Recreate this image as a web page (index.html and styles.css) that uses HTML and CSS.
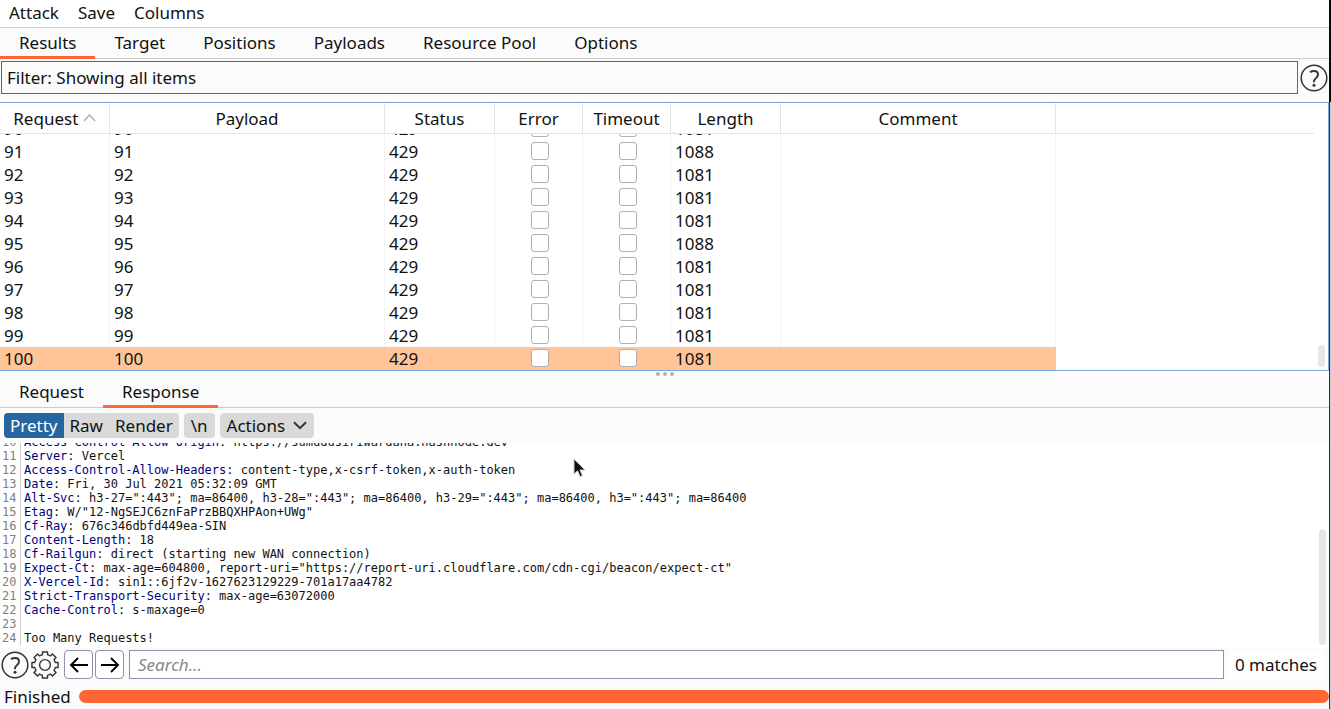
FILE: index.html
```html
<!DOCTYPE html>
<html lang="en">
<head>
  <meta charset="UTF-8">
  <meta name="viewport" content="width=device-width, initial-scale=1.0">
  <title>Intruder attack</title>
  <link rel="stylesheet" href="styles.css">
</head>
<body>
  <div class="app">
    <nav class="menu">
      <button>Attack</button>
      <button>Save</button>
      <button>Columns</button>
    </nav>

    <nav class="tabs">
      <button class="active">Results</button>
      <button>Target</button>
      <button>Positions</button>
      <button>Payloads</button>
      <button>Resource Pool</button>
      <button>Options</button>
    </nav>

    <div class="filter-row">
      <button class="filter">Filter: Showing all items</button>
      <button class="icon-btn" aria-label="Filter help">
        <svg width="28" height="28" viewBox="0 0 28 28" fill="none" stroke="#333" stroke-width="1.5">
          <circle cx="14" cy="14" r="12.8"/>
          <path d="M10 8.2c1.2-.8 2.5-1.2 3.9-1.2 2.6 0 4.1 1.3 4.1 3.4 0 3.6-4 3.9-4 7.2v.6" stroke-width="1.9"/>
          <circle cx="14" cy="21.2" r="1.5" fill="#333" stroke="none"/>
        </svg>
      </button>
    </div>

    <div class="results">
      <div class="results-scroll" id="resultsScroll">
        <table>
          <colgroup>
            <col class="w-mid"><col class="w-wide"><col class="w-mid"><col class="w-small">
            <col class="w-small"><col class="w-mid"><col class="w-wide"><col>
          </colgroup>
          <thead>
            <tr>
              <th>Request <svg width="13" height="8" viewBox="0 0 13 8" fill="none" stroke="#aaa" stroke-width="1.2"><path d="M1 7l5.5-6L12 7"/></svg></th>
              <th>Payload</th>
              <th>Status</th>
              <th>Error</th>
              <th>Timeout</th>
              <th>Length</th>
              <th>Comment</th>
              <th class="rest"></th>
            </tr>
          </thead>
          <tbody id="rows"></tbody>
        </table>
      </div>
      <div class="thumb thumb-results"></div>
    </div>

    <div class="splitter"><i></i><i></i><i></i></div>

    <nav class="tabs">
      <button>Request</button>
      <button class="active">Response</button>
    </nav>

    <div class="view-bar">
      <div class="group">
        <button class="on">Pretty</button>
        <button>Raw</button>
        <button>Render</button>
      </div>
      <button class="newline">\n</button>
      <button class="actions">Actions
        <svg width="14" height="9" viewBox="0 0 14 9" fill="none" stroke="#333" stroke-width="2"><path d="M1 1.2l6 6 6-6"/></svg>
      </button>
    </div>

    <div class="message">
      <ol class="code">
        <li><span>10</span><b>Access-Control-Allow-Origin</b>: https://sumudusiriwardana.hashnode.dev</li>
        <li><span>11</span><b>Server</b>: Vercel</li>
        <li><span>12</span><b>Access-Control-Allow-Headers</b>: content-type,x-csrf-token,x-auth-token</li>
        <li><span>13</span><b>Date</b>: Fri, 30 Jul 2021 05:32:09 GMT</li>
        <li><span>14</span><b>Alt-Svc</b>: h3-27=":443"; ma=86400, h3-28=":443"; ma=86400, h3-29=":443"; ma=86400, h3=":443"; ma=86400</li>
        <li><span>15</span><b>Etag</b>: W/"12-NgSEJC6znFaPrzBBQXHPAon+UWg"</li>
        <li><span>16</span><b>Cf-Ray</b>: 676c346dbfd449ea-SIN</li>
        <li><span>17</span><b>Content-Length</b>: 18</li>
        <li><span>18</span><b>Cf-Railgun</b>: direct (starting new WAN connection)</li>
        <li><span>19</span><b>Expect-Ct</b>: max-age=604800, report-uri="https://report-uri.cloudflare.com/cdn-cgi/beacon/expect-ct"</li>
        <li><span>20</span><b>X-Vercel-Id</b>: sin1::6jf2v-1627623129229-701a17aa4782</li>
        <li><span>21</span><b>Strict-Transport-Security</b>: max-age=63072000</li>
        <li><span>22</span><b>Cache-Control</b>: s-maxage=0</li>
        <li><span>23</span></li>
        <li><span>24</span>Too Many Requests!</li>
      </ol>
      <div class="thumb thumb-message"></div>
    </div>

    <div class="search-bar">
      <button class="icon-btn" aria-label="Search help">
        <svg width="28" height="28" viewBox="0 0 28 28" fill="none" stroke="#333" stroke-width="1.5">
          <circle cx="14" cy="14" r="12.8"/>
          <path d="M10 8.2c1.2-.8 2.5-1.2 3.9-1.2 2.6 0 4.1 1.3 4.1 3.4 0 3.6-4 3.9-4 7.2v.6" stroke-width="1.9"/>
          <circle cx="14" cy="21.2" r="1.5" fill="#333" stroke="none"/>
        </svg>
      </button>
      <button class="icon-btn" aria-label="Search settings">
        <svg width="28" height="28" viewBox="0 0 28 28" fill="none" stroke="#333" stroke-width="1.4" stroke-linejoin="round">
          <path id="gear"/>
          <circle cx="14" cy="14" r="5.4"/>
        </svg>
      </button>
      <button class="step" aria-label="Previous match">
        <svg width="20" height="16" viewBox="0 0 20 16" fill="none" stroke="#000" stroke-width="1.9"><path d="M19 8H2M9 1L2 8l7 7"/></svg>
      </button>
      <button class="step" aria-label="Next match">
        <svg width="20" height="16" viewBox="0 0 20 16" fill="none" stroke="#000" stroke-width="1.9"><path d="M1 8h17M11 1l7 7-7 7"/></svg>
      </button>
      <input type="text" placeholder="Search..." aria-label="Search">
      <span class="matches">0 matches</span>
    </div>

    <footer class="status">
      <span>Finished</span>
      <div class="progress"></div>
    </footer>
  </div>
  <div class="edge"></div>

  <svg class="pointer" width="14" height="20" viewBox="0 0 14 20"><path d="M1 1v15l3.6-3.2L7 18.6l2.4-1-2.4-5.6H12z" fill="#111" stroke="#ccc"/></svg>

  <script>
    const lengths = { 91: 1088, 95: 1088 };
    const rows = document.getElementById('rows');

    for (let n = 90; n <= 100; n++) {
      const tr = document.createElement('tr');
      if (n === 100) tr.classList.add('selected');
      tr.innerHTML = `
        <td>${n}</td>
        <td>${n}</td>
        <td>429</td>
        <td class="check"><input type="checkbox" aria-label="Error ${n}"></td>
        <td class="check"><input type="checkbox" aria-label="Timeout ${n}"></td>
        <td>${lengths[n] || 1081}</td>
        <td></td>
        <td class="rest"></td>`;
      rows.appendChild(tr);
    }

    const scroller = document.getElementById('resultsScroll');
    scroller.scrollTop = scroller.scrollHeight;

    // gear outline, eight teeth
    const pts = [];
    for (let i = 0; i < 8; i++) {
      [[-14, 10.6], [-11, 13.3], [11, 13.3], [14, 10.6]].forEach(([deg, r]) => {
        const a = (i * 45 + deg) * Math.PI / 180;
        pts.push((14 + r * Math.sin(a)).toFixed(2) + ' ' + (14 - r * Math.cos(a)).toFixed(2));
      });
    }
    document.getElementById('gear').setAttribute('d', 'M' + pts.join('L') + 'z');
  </script>
</body>
</html>
```

FILE: styles.css
```css
* { box-sizing: border-box; margin: 0; padding: 0; }
body {
  display: flex;
  height: 100vh;
  overflow: hidden;
  background: #fbfbfb;
  color: #111;
  font-family: "Noto Sans", sans-serif;
  font-size: 17px;
  line-height: 23px;
}
button {
  font: inherit;
  color: inherit;
  background: none;
  border: none;
  cursor: pointer;
}
.app {
  flex: 1;
  min-width: 0;
  display: flex;
  flex-direction: column;
}
.edge {
  width: 2px;
  background: linear-gradient(#0a0a0a 102px, transparent 102px), linear-gradient(to right, #333 1px, #ccc 1px);
}
.menu {
  display: flex;
  gap: 19px;
  height: 28px;
  padding: 0 9px 2px;
  background: #fff;
  border-bottom: 1px solid #ccc;
}
.tabs {
  display: flex;
  flex-shrink: 0;
  height: 31px;
  border-bottom: 1px solid #ccc;
}
.tabs button {
  height: 31px;
  padding: 0 19px;
  border-bottom: 3px solid transparent;
}
.tabs button.active { border-bottom-color: #ff6633; }
.filter-row {
  display: flex;
  align-items: center;
  gap: 2px;
  padding: 2px 1px 8px;
}
.filter {
  flex: 1;
  height: 33px;
  padding: 0 5px;
  border: 1px solid #666;
  text-align: left;
}
.icon-btn {
  width: 28px;
  height: 28px;
}
svg { display: block; }

.results {
  position: relative;
  flex-shrink: 0;
  height: 269px;
  background: #fff;
  border: 1px solid #7aa7d8;
  border-left: none;
}
.results-scroll {
  height: 100%;
  margin-right: 14px;
  overflow-y: scroll;
  scrollbar-width: none;
}
table {
  width: 100%;
  table-layout: fixed;
  border-collapse: separate;
  border-spacing: 0;
}
.w-mid { width: 110px; }
.w-wide { width: 275px; }
.w-small { width: 88px; }
th {
  position: sticky;
  top: 0;
  z-index: 1;
  height: 31px;
  background: #fff;
  border-right: 1px solid #e4e4e4;
  border-bottom: 1px solid #e4e4e4;
  font-weight: normal;
}
th svg { display: inline-block; vertical-align: 3px; }
td {
  height: 23px;
  padding: 0 4px;
  border-right: 1px solid #f3f3f3;
  line-height: 23px;
}
.rest { border-right: none; }
.selected td:not(.rest) {
  background: #ffc599;
  border-right-color: #ffc599;
}
.check { padding: 0 2px 2px 4px; }
.check input {
  appearance: none;
  display: block;
  width: 18px;
  height: 18px;
  margin: 0 auto;
  background: #fff;
  border: 1px solid #b0b0b0;
  border-radius: 3px;
}
.thumb {
  position: absolute;
  width: 7px;
  background: #e6e6e6;
  border-radius: 4px;
}
.thumb-results { right: 3px; bottom: 3px; height: 22px; }
.thumb-message { right: 3px; bottom: 3px; height: 116px; }

.splitter {
  display: flex;
  flex-shrink: 0;
  justify-content: center;
  align-items: center;
  gap: 3px;
  height: 6px;
  background: #fff;
}
.splitter i {
  width: 4px;
  height: 4px;
  border-radius: 50%;
  background: #b0b0b0;
}

.view-bar {
  display: flex;
  flex-shrink: 0;
  gap: 5px;
  padding: 5px 4px;
}
.view-bar button {
  height: 25px;
  padding: 0 7px;
  background: #d9d9d9;
}
.group {
  display: flex;
  border-radius: 4px;
  overflow: hidden;
}
.view-bar .group button { padding: 0 6px; }
.view-bar .group .on {
  background: #2565a0;
  color: #fff;
}
.view-bar .newline,
.view-bar .actions {
  border-radius: 4px;
}
.view-bar .actions {
  display: flex;
  align-items: center;
  gap: 8px;
}

.message {
  position: relative;
  flex: 1;
  min-height: 0;
  display: flex;
  flex-direction: column;
  justify-content: flex-end;
  overflow: hidden;
  background: #fff;
  padding-bottom: 3px;
}
.code {
  list-style: none;
  font-family: "DejaVu Sans Mono", monospace;
  font-size: 12px;
  line-height: 14px;
}
.code li {
  display: flex;
  height: 14px;
  white-space: pre;
}
.code span {
  width: 21px;
  margin-right: 3px;
  padding-left: 2px;
  border-right: 1px solid #ccc;
  color: #808080;
}
.code b {
  font-weight: normal;
  color: #000080;
}

.search-bar {
  display: flex;
  flex-shrink: 0;
  align-items: center;
  gap: 2px;
  padding: 2px 5px 2px 1px;
}
.step {
  display: flex;
  justify-content: center;
  align-items: center;
  width: 29px;
  height: 29px;
  background: #fff;
  border: 1px solid #9490aa;
  border-radius: 4px;
}
.search-bar .icon-btn + .step { margin-left: 3px; }
.search-bar input {
  flex: 1;
  height: 29px;
  margin: 0 2px 0 3px;
  padding: 0 8px;
  background: #fff;
  border: 1px solid #9490aa;
  font: inherit;
}
.search-bar input::placeholder {
  color: #888;
  font-style: italic;
}
.matches {
  padding: 3px 7px;
  background: #fff;
}
.status {
  display: flex;
  flex-shrink: 0;
  align-items: center;
  gap: 8px;
  height: 28px;
  padding: 4px 0 1px 4px;
}
.progress {
  flex: 1;
  height: 13px;
  border-radius: 7px;
  background: #ff6633;
}
.pointer {
  position: absolute;
  left: 573px;
  top: 458px;
}
```
